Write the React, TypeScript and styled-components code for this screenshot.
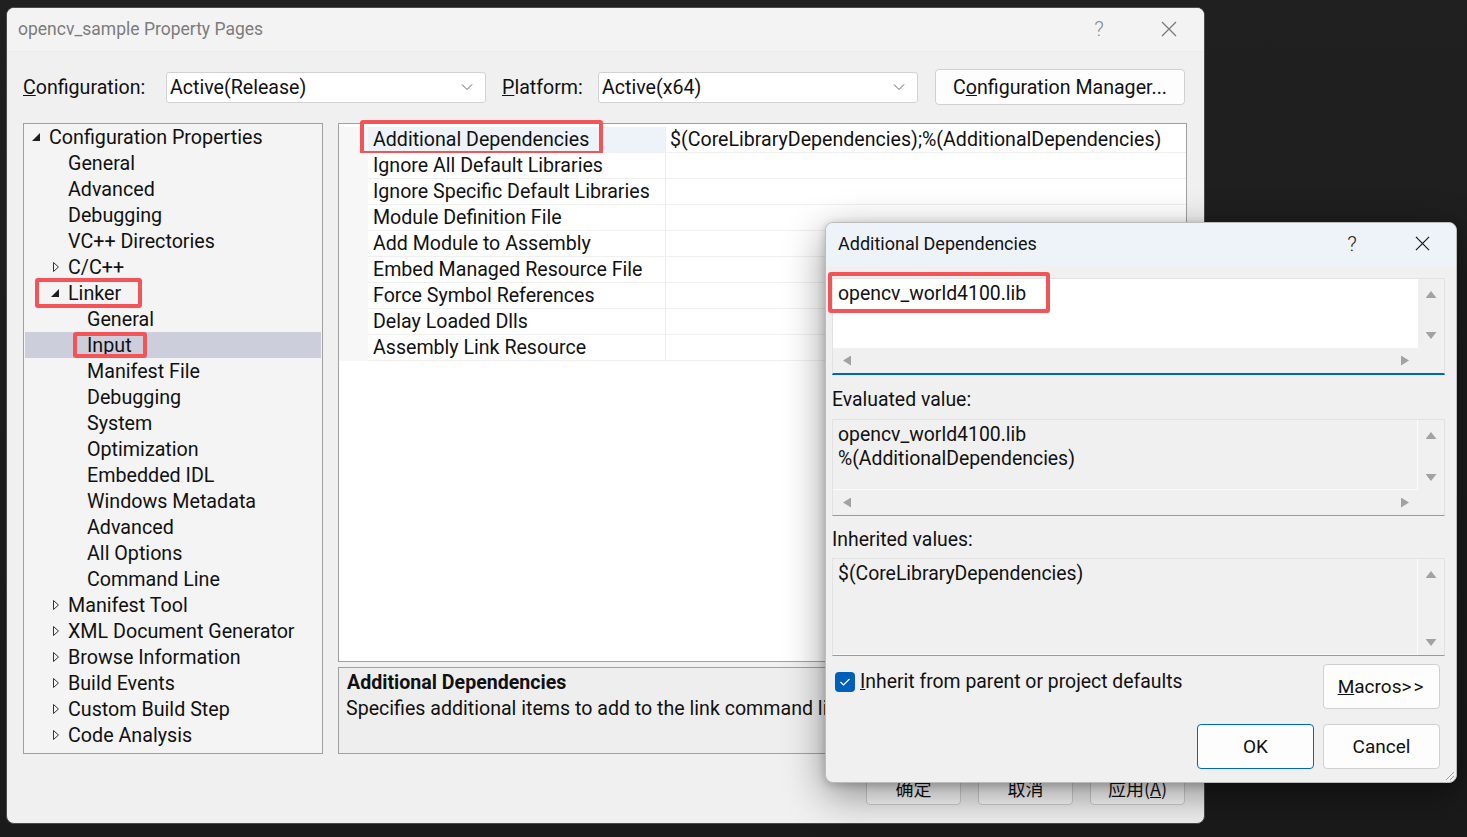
import React from 'react'
import styled, { createGlobalStyle } from 'styled-components'

const GlobalStyle = createGlobalStyle`
  html, body {
    margin: 0;
    padding: 0;
    background: #1d1d1d;
  }
  body {
    font-family: Roboto, "Noto Sans", Arial, sans-serif;
    color: #111;
  }
  * {
    box-sizing: border-box;
  }
`

const Screen = styled.div`
  position: relative;
  width: 1467px;
  height: 837px;
  padding: 7px 0 0 6px;
  background: linear-gradient(#202020, #1a1a1a);
  overflow: hidden;
`

const MainWindow = styled.div`
  width: 1199px;
  height: 817px;
  border: 1px solid #4a4a4a;
  border-radius: 8px;
  background: #f0f0f0;
  overflow: hidden;
  display: flex;
  flex-direction: column;
`

const TitleBar = styled.div`
  height: 44px;
  flex-shrink: 0;
  display: flex;
  align-items: center;
  padding: 0 0 1px 11px;
  background: #f3f3f3;
  border-bottom: 1px solid #ececec;
`

const TitleText = styled.div`
  font-size: 17.5px;
  color: #7c7c7c;
`

const TitleControls = styled.div`
  margin-left: auto;
  margin-right: 12px;
  display: flex;
  gap: 24px;
`

const ControlBox = styled.div<{ $dark?: boolean }>`
  width: 46px;
  height: 30px;
  display: flex;
  align-items: center;
  justify-content: center;
  font-size: 21px;
  font-weight: 300;
  color: ${p => (p.$dark ? '#222' : '#8a8a8a')};
`

const Body = styled.div`
  flex: 1;
  display: flex;
  flex-direction: column;
  padding: 17px 17px 0 16px;
`

const ConfigRow = styled.div`
  height: 36px;
  display: flex;
  align-items: center;
  font-size: 19.6px;
`

const FieldLabel = styled.div<{ $w: number; $gap?: number }>`
  width: ${p => p.$w}px;
  margin-left: ${p => p.$gap || 0}px;
  white-space: nowrap;
`

const Combo = styled.div`
  width: 320px;
  height: 31px;
  display: flex;
  align-items: center;
  justify-content: space-between;
  padding: 0 12px 0 3px;
  background: #fff;
  border: 1px solid #d2d2d2;
  border-radius: 3px;
`

const PushButton = styled.div<{ $w: number; $h: number; $primary?: boolean }>`
  width: ${p => p.$w}px;
  height: ${p => p.$h}px;
  display: flex;
  align-items: center;
  justify-content: center;
  background: #fdfdfd;
  border: 1px solid ${p => (p.$primary ? '#0067c0' : '#d0d0d0')};
  border-radius: 4px;
  white-space: nowrap;
`

const ManagerButton = styled(PushButton)`
  margin-left: 17px;
`

const Content = styled.div`
  margin-top: 18px;
  height: 631px;
  display: flex;
  gap: 15px;
`

const Tree = styled.div`
  width: 300px;
  border: 1px solid #a0a0a0;
  background: #f4f4f4;
  padding: 0 1px;
  font-size: 19.7px;
`

const TreeRow = styled.div<{ $level: number; $selected?: boolean }>`
  position: relative;
  height: 26px;
  display: flex;
  align-items: center;
  padding-left: ${p => 5 + p.$level * 19}px;
  background: ${p => (p.$selected ? '#cccedb' : 'transparent')};
  white-space: nowrap;
`

const Toggle = styled.span`
  width: 19px;
  height: 26px;
  flex-shrink: 0;
  display: flex;
  align-items: center;
`

const Mark = styled.span<{ $l: number; $t: number; $w: number; $h: number }>`
  position: absolute;
  left: ${p => p.$l}px;
  top: ${p => p.$t}px;
  width: ${p => p.$w}px;
  height: ${p => p.$h}px;
  border: 4px solid #f25457;
  border-radius: 3px;
  pointer-events: none;
`

const RightColumn = styled.div`
  width: 849px;
  display: flex;
  flex-direction: column;
  gap: 5px;
`

const Grid = styled.div`
  flex: 1;
  border: 1px solid #a0a0a0;
  background: #fff;
  padding-top: 3px;
  font-size: 19.6px;
`

const PropRow = styled.div`
  position: relative;
  display: grid;
  grid-template-columns: 29px 298px 1fr;
  height: 26px;
`

const Gutter = styled.div`
  background: #f7f7f7;
`

const PropName = styled.div<{ $active?: boolean }>`
  display: flex;
  align-items: center;
  padding-left: 5px;
  background: ${p => (p.$active ? '#eef2f9' : '#fff')};
  border-right: 1px solid #ededed;
  border-bottom: 1px solid #f0f0f0;
  white-space: nowrap;
`

const PropValue = styled.div`
  display: flex;
  align-items: center;
  padding-left: 4px;
  border-bottom: 1px solid #f0f0f0;
  white-space: nowrap;
`

const Description = styled.div`
  height: 87px;
  border: 1px solid #a0a0a0;
  background: #eeeeee;
  padding: 2px 8px;
  font-size: 19.6px;
  line-height: 26px;
`

const DescTitle = styled.div`
  font-weight: 700;
`

const DescText = styled.div`
  margin-left: -1px;
  white-space: nowrap;
`

const FooterButtons = styled.div`
  margin-top: 17px;
  margin-right: 2px;
  display: flex;
  justify-content: flex-end;
  gap: 17px;
  font-family: "Noto Sans CJK SC", Roboto, sans-serif;
  font-size: 18px;
`

/* overlay dialog */

const Dialog = styled.div`
  position: absolute;
  left: 825px;
  top: 222px;
  width: 632px;
  border: 1px solid #bcbcbc;
  border-radius: 8px;
  background: #f0f0f0;
  box-shadow: 0 12px 40px rgba(0, 0, 0, 0.42), 0 2px 8px rgba(0, 0, 0, 0.2);
  overflow: hidden;
  font-size: 19.4px;
  color: #111;
`

const DialogTitle = styled.div`
  height: 43px;
  display: flex;
  align-items: center;
  padding: 0 0 2px 12px;
  background: #eef2f9;
  font-size: 18px;
`

const DialogControls = styled.div`
  margin-left: auto;
  margin-right: 11px;
  display: flex;
  gap: 24px;
`

const DialogBody = styled.div`
  padding: 12px 11px 13px 6px;
  display: flex;
  flex-direction: column;
`

const ValueBox = styled.div<{ $edit?: boolean; $h: number; $hscroll?: boolean }>`
  position: relative;
  height: ${p => p.$h}px;
  display: grid;
  grid-template-columns: 1fr 26px;
  grid-template-rows: ${p => (p.$hscroll ? '1fr 25px' : '1fr')};
  border: 1px solid #e2e2e2;
  border-bottom: ${p => (p.$edit ? '2px solid #0067c0' : '1px solid #9a9a9a')};
  background: #f0f0f0;
`

const ValueText = styled.div<{ $edit?: boolean }>`
  padding: 3px 5px 1px;
  line-height: 24px;
  background: ${p => (p.$edit ? '#fff' : '#f0f0f0')};
  border-right: 1px solid ${p => (p.$edit ? '#fff' : '#fbfbfb')};
  border-bottom: 1px solid ${p => (p.$edit ? '#fff' : '#fbfbfb')};
  white-space: nowrap;
`

const VScroll = styled.div`
  display: flex;
  flex-direction: column;
  align-items: center;
  justify-content: space-between;
  padding: 12px 0 9px;
`

const HScroll = styled.div`
  display: flex;
  align-items: center;
  justify-content: space-between;
  padding: 0 9px 0 10px;
`

const Arrow = styled.span<{ $dir: 'up' | 'down' | 'left' | 'right' }>`
  display: block;
  background: #a2a2a2;
  width: ${p => (p.$dir === 'up' || p.$dir === 'down' ? 11 : 8)}px;
  height: ${p => (p.$dir === 'up' || p.$dir === 'down' ? 7 : 10)}px;
  clip-path: ${p =>
    p.$dir === 'up'
      ? 'polygon(50% 0, 100% 100%, 0 100%)'
      : p.$dir === 'down'
      ? 'polygon(0 0, 100% 0, 50% 100%)'
      : p.$dir === 'left'
      ? 'polygon(100% 0, 100% 100%, 0 50%)'
      : 'polygon(0 0, 100% 50%, 0 100%)'};
`

const SectionLabel = styled.div<{ $top: number; $bottom: number }>`
  margin: ${p => p.$top}px 0 ${p => p.$bottom}px;
  padding-top: 1px;
  line-height: 24px;
`

const OptionRow = styled.div`
  margin-top: 8px;
  display: flex;
  justify-content: space-between;
  align-items: flex-start;
`

const CheckLabel = styled.label`
  margin-top: 6px;
  margin-left: 3px;
  display: flex;
  align-items: center;
  gap: 5px;
  line-height: 24px;
`

const CheckBox = styled.span`
  width: 20px;
  height: 20px;
  border-radius: 4px;
  background: #005fb8;
  display: flex;
  align-items: center;
  justify-content: center;
`

const DialogButtons = styled.div`
  margin-top: 15px;
  display: flex;
  justify-content: flex-end;
  gap: 9px;
`

const DialogButton = styled(PushButton)`
  margin-right: 5px;
  font-size: 19px;
`

const OkButton = styled(PushButton)`
  font-size: 19px;
`

const Spaced = styled.span`
  letter-spacing: 2px;
`

const Grip = styled.svg`
  position: absolute;
  right: 1px;
  bottom: 1px;
`

type TreeItem = {
  label: string
  level: number
  toggle?: 'open' | 'closed'
  selected?: boolean
  mark?: { l: number; t: number; w: number; h: number }
}

const treeItems: TreeItem[] = [
  { label: 'Configuration Properties', level: 0, toggle: 'open' },
  { label: 'General', level: 1 },
  { label: 'Advanced', level: 1 },
  { label: 'Debugging', level: 1 },
  { label: 'VC++ Directories', level: 1 },
  { label: 'C/C++', level: 1, toggle: 'closed' },
  { label: 'Linker', level: 1, toggle: 'open', mark: { l: 10, t: -2, w: 107, h: 30 } },
  { label: 'General', level: 2 },
  { label: 'Input', level: 2, selected: true, mark: { l: 48, t: 0, w: 74, h: 26 } },
  { label: 'Manifest File', level: 2 },
  { label: 'Debugging', level: 2 },
  { label: 'System', level: 2 },
  { label: 'Optimization', level: 2 },
  { label: 'Embedded IDL', level: 2 },
  { label: 'Windows Metadata', level: 2 },
  { label: 'Advanced', level: 2 },
  { label: 'All Options', level: 2 },
  { label: 'Command Line', level: 2 },
  { label: 'Manifest Tool', level: 1, toggle: 'closed' },
  { label: 'XML Document Generator', level: 1, toggle: 'closed' },
  { label: 'Browse Information', level: 1, toggle: 'closed' },
  { label: 'Build Events', level: 1, toggle: 'closed' },
  { label: 'Custom Build Step', level: 1, toggle: 'closed' },
  { label: 'Code Analysis', level: 1, toggle: 'closed' },
]

const properties = [
  'Additional Dependencies',
  'Ignore All Default Libraries',
  'Ignore Specific Default Libraries',
  'Module Definition File',
  'Add Module to Assembly',
  'Embed Managed Resource File',
  'Force Symbol References',
  'Delay Loaded Dlls',
  'Assembly Link Resource',
]

function Chevron() {
  return (
    <svg width="12" height="8" viewBox="0 0 12 8">
      <polyline points="1,1.5 6,6.5 11,1.5" fill="none" stroke="#606060" strokeWidth="1" />
    </svg>
  )
}

function CloseIcon({ color, size }: { color: string; size: number }) {
  return (
    <svg width={size} height={size} viewBox="0 0 16 16">
      <path d="M1 1 L15 15 M15 1 L1 15" stroke={color} strokeWidth="1.3" fill="none" />
    </svg>
  )
}

function ToggleIcon({ kind }: { kind: 'open' | 'closed' }) {
  return (
    <svg width="12" height="12" viewBox="0 0 12 12">
      {kind === 'open' ? (
        <polygon points="10,2 10,10 2,10" fill="#1e1e1e" />
      ) : (
        <polygon points="4.5,1.5 4.5,10.5 9.5,6" fill="none" stroke="#333" strokeWidth="1" />
      )}
    </svg>
  )
}

function Scrollers({ h }: { h: boolean }) {
  return (
    <>
      <VScroll>
        <Arrow $dir="up" />
        <Arrow $dir="down" />
      </VScroll>
      {h && (
        <>
          <HScroll>
            <Arrow $dir="left" />
            <Arrow $dir="right" />
          </HScroll>
          <div />
        </>
      )}
    </>
  )
}

export default function App() {
  return (
    <>
      <GlobalStyle />
      <Screen>
        <MainWindow>
          <TitleBar>
            <TitleText>opencv_sample Property Pages</TitleText>
            <TitleControls>
              <ControlBox>?</ControlBox>
              <ControlBox>
                <CloseIcon color="#7a7a7a" size={16} />
              </ControlBox>
            </TitleControls>
          </TitleBar>
          <Body>
            <ConfigRow>
              <FieldLabel $w={143}>
                <u>C</u>onfiguration:
              </FieldLabel>
              <Combo>
                <span>Active(Release)</span>
                <Chevron />
              </Combo>
              <FieldLabel $w={96} $gap={16}>
                <u>P</u>latform:
              </FieldLabel>
              <Combo>
                <span>Active(x64)</span>
                <Chevron />
              </Combo>
              <ManagerButton $w={250} $h={36}>
                <span>
                  C<u>o</u>nfiguration Manager...
                </span>
              </ManagerButton>
            </ConfigRow>

            <Content>
              <Tree>
                {treeItems.map((item, i) => (
                  <TreeRow key={i} $level={item.level} $selected={item.selected}>
                    <Toggle>{item.toggle && <ToggleIcon kind={item.toggle} />}</Toggle>
                    <span>{item.label}</span>
                    {item.mark && <Mark $l={item.mark.l} $t={item.mark.t} $w={item.mark.w} $h={item.mark.h} />}
                  </TreeRow>
                ))}
              </Tree>

              <RightColumn>
                <Grid>
                  {properties.map((name, i) => (
                    <PropRow key={name}>
                      <Gutter />
                      <PropName $active={i === 0}>{name}</PropName>
                      <PropValue>{i === 0 ? '$(CoreLibraryDependencies);%(AdditionalDependencies)' : ''}</PropValue>
                      {i === 0 && <Mark $l={21} $t={-7} $w={243} $h={35} />}
                    </PropRow>
                  ))}
                </Grid>
                <Description>
                  <DescTitle>Additional Dependencies</DescTitle>
                  <DescText>Specifies additional items to add to the link command line. [i.e. kernel32.lib]</DescText>
                </Description>
              </RightColumn>
            </Content>

            <FooterButtons>
              <PushButton $w={95} $h={34}>确定</PushButton>
              <PushButton $w={95} $h={34}>取消</PushButton>
              <PushButton $w={95} $h={34}>
                <span>
                  应用(<u>A</u>)
                </span>
              </PushButton>
            </FooterButtons>
          </Body>
        </MainWindow>

        <Dialog>
          <DialogTitle>
            <span>Additional Dependencies</span>
            <DialogControls>
              <ControlBox $dark>?</ControlBox>
              <ControlBox $dark>
                <CloseIcon color="#1a1a1a" size={15} />
              </ControlBox>
            </DialogControls>
          </DialogTitle>
          <DialogBody>
            <ValueBox $edit $h={97} $hscroll>
              <ValueText $edit>opencv_world4100.lib</ValueText>
              <Scrollers h />
              <Mark $l={-5} $t={-7} $w={222} $h={41} />
            </ValueBox>

            <SectionLabel $top={12} $bottom={7}>Evaluated value:</SectionLabel>
            <ValueBox $h={97} $hscroll>
              <ValueText>
                opencv_world4100.lib
                <br />
                %(AdditionalDependencies)
              </ValueText>
              <Scrollers h />
            </ValueBox>

            <SectionLabel $top={11} $bottom={6}>Inherited values:</SectionLabel>
            <ValueBox $h={98}>
              <ValueText>$(CoreLibraryDependencies)</ValueText>
              <Scrollers h={false} />
            </ValueBox>

            <OptionRow>
              <CheckLabel>
                <CheckBox>
                  <svg width="12" height="10" viewBox="0 0 12 10">
                    <polyline points="1.5,5 4.5,8 10.5,2" fill="none" stroke="#fff" strokeWidth="1.2" />
                  </svg>
                </CheckBox>
                <span>
                  <u>I</u>nherit from parent or project defaults
                </span>
              </CheckLabel>
              <DialogButton $w={117} $h={45}>
                <span>
                  <u>M</u>acros<Spaced>&gt;&gt;</Spaced>
                </span>
              </DialogButton>
            </OptionRow>

            <DialogButtons>
              <OkButton $w={117} $h={45} $primary>
                OK
              </OkButton>
              <DialogButton $w={117} $h={45}>
                Cancel
              </DialogButton>
            </DialogButtons>
          </DialogBody>
          <Grip width="11" height="11" viewBox="0 0 11 11">
            <path d="M10 2 L2 10 M10 6 L6 10" stroke="#a0a0a0" strokeWidth="1" />
          </Grip>
        </Dialog>
      </Screen>
    </>
  )
}
